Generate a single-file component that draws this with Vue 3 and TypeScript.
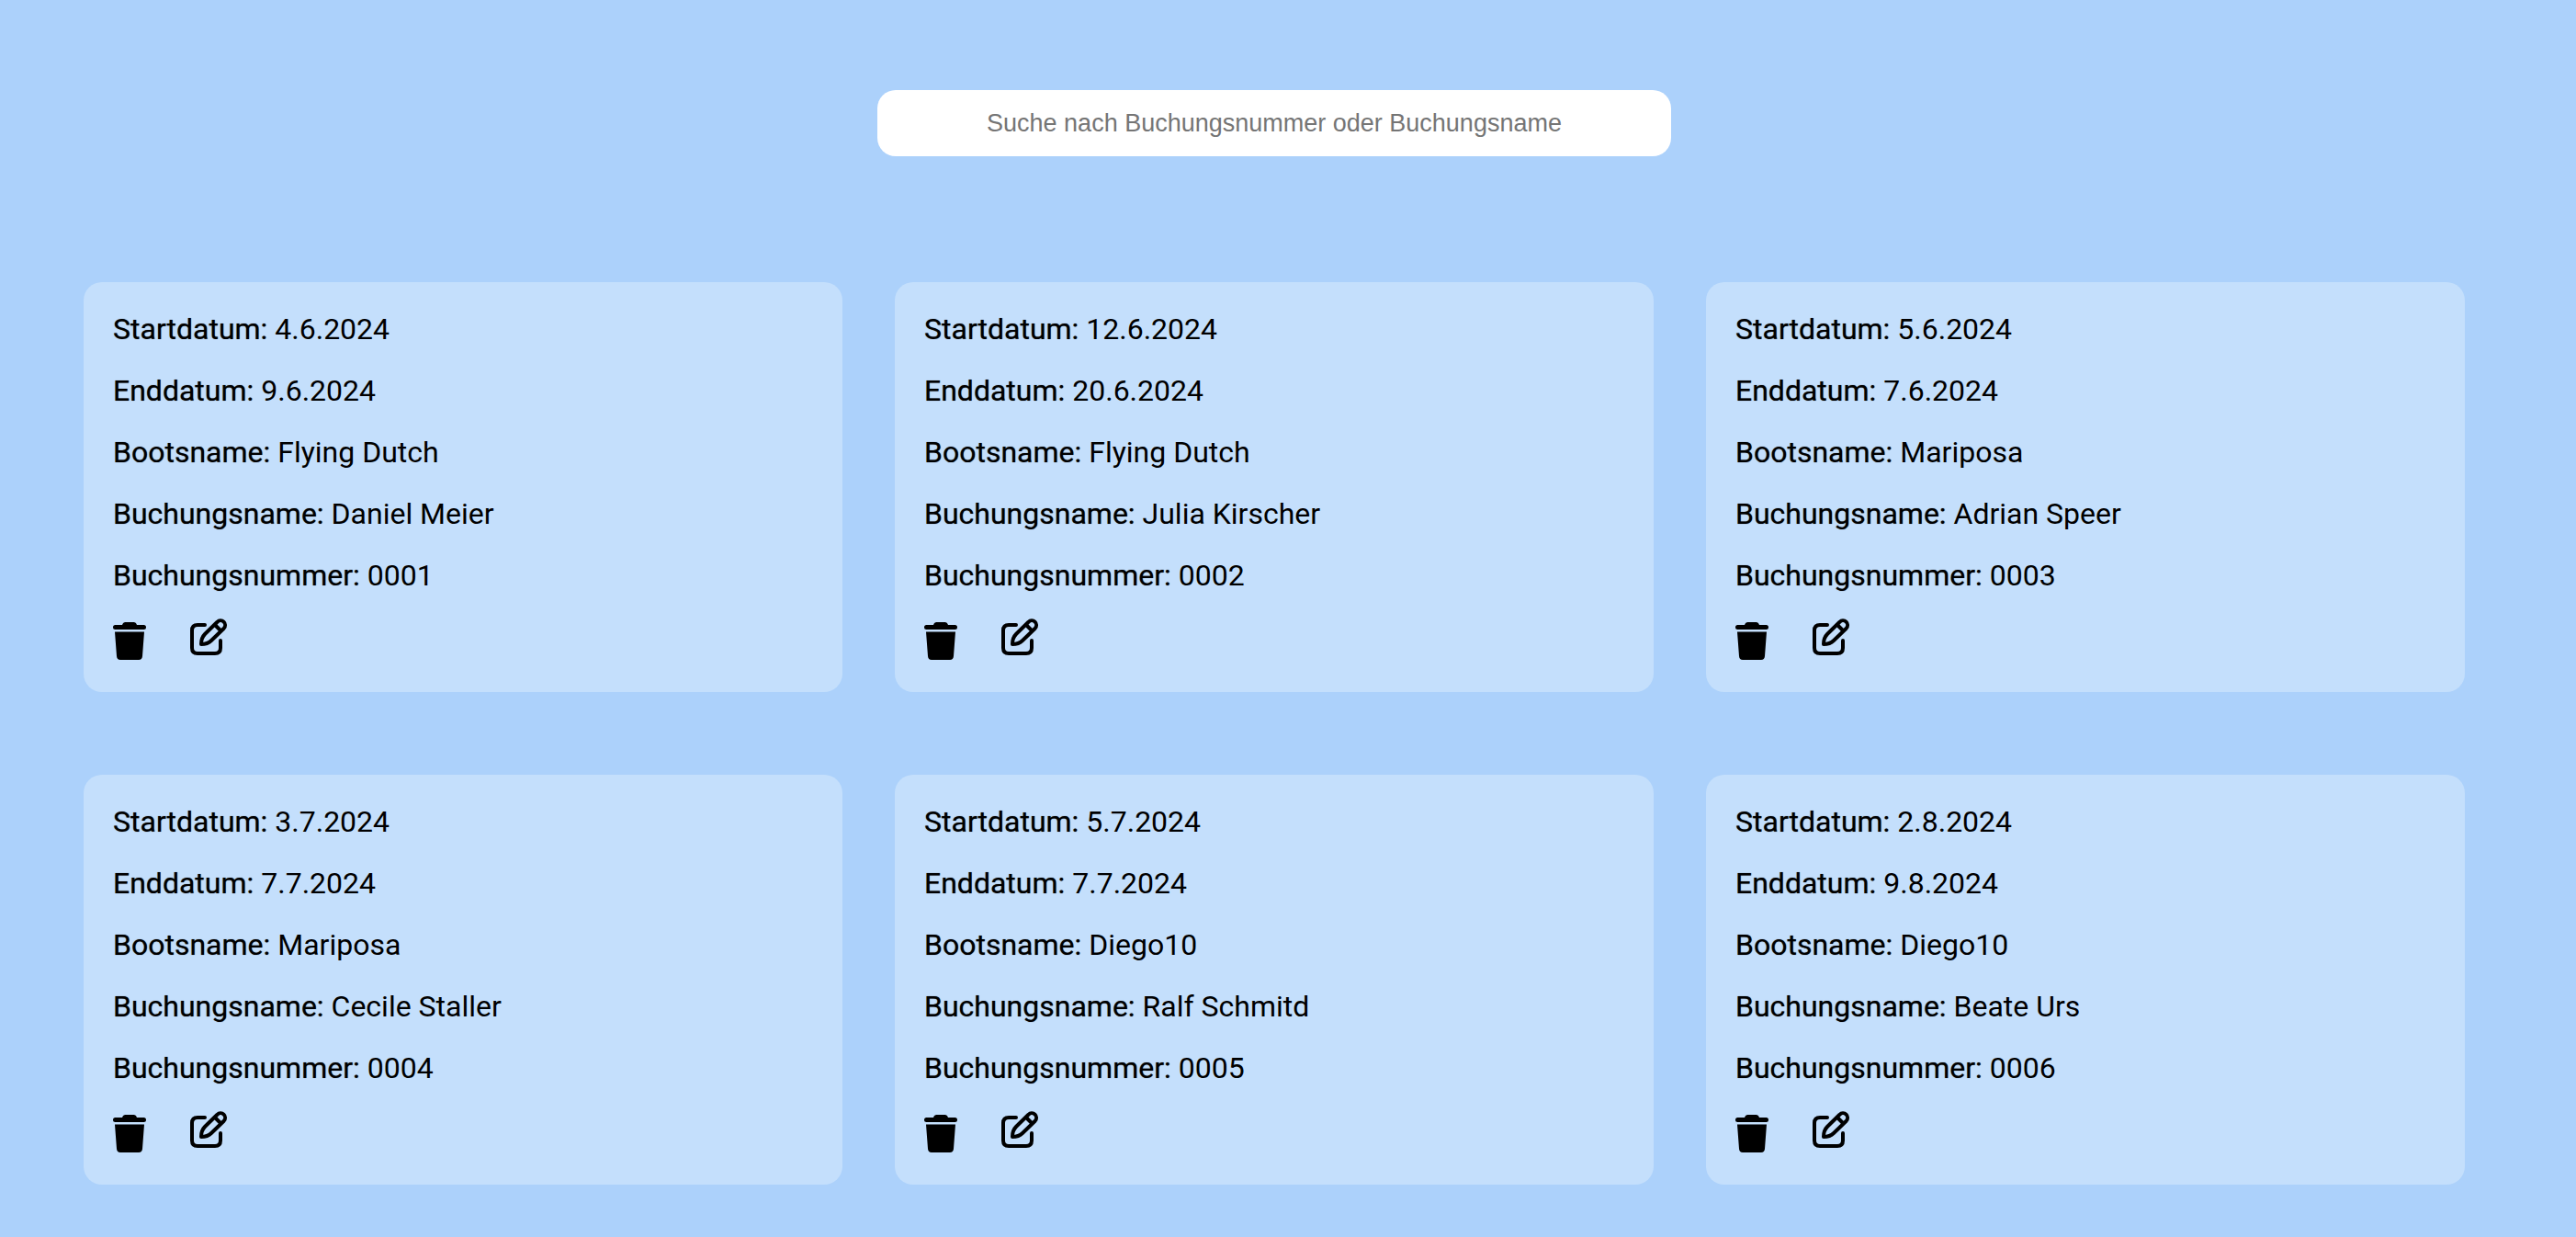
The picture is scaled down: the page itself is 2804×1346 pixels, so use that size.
<script setup lang="ts">
import { computed, ref } from 'vue'

interface Booking {
  start: string
  end: string
  boat: string
  name: string
  number: string
}

const bookings = ref<Booking[]>([
  { start: '4.6.2024', end: '9.6.2024', boat: 'Flying Dutch', name: 'Daniel Meier', number: '0001' },
  { start: '12.6.2024', end: '20.6.2024', boat: 'Flying Dutch', name: 'Julia Kirscher', number: '0002' },
  { start: '5.6.2024', end: '7.6.2024', boat: 'Mariposa', name: 'Adrian Speer', number: '0003' },
  { start: '3.7.2024', end: '7.7.2024', boat: 'Mariposa', name: 'Cecile Staller', number: '0004' },
  { start: '5.7.2024', end: '7.7.2024', boat: 'Diego10', name: 'Ralf Schmitd', number: '0005' },
  { start: '2.8.2024', end: '9.8.2024', boat: 'Diego10', name: 'Beate Urs', number: '0006' },
])

const query = ref('')

const visible = computed(() => {
  const q = query.value.trim().toLowerCase()
  return bookings.value.filter(b => b.number.includes(q) || b.name.toLowerCase().includes(q))
})

function remove(number: string) {
  bookings.value = bookings.value.filter(b => b.number !== number)
}
</script>

<template>
  <main class="page">
    <input
      v-model="query"
      class="search"
      type="text"
      aria-label="Suche nach Buchungsnummer oder Buchungsname"
      placeholder="Suche nach Buchungsnummer oder Buchungsname"
    />
    <section class="grid">
      <article v-for="b in visible" :key="b.number" class="card">
        <p class="row"><span class="label">Startdatum:</span> {{ b.start }}</p>
        <p class="row"><span class="label">Enddatum:</span> {{ b.end }}</p>
        <p class="row"><span class="label">Bootsname:</span> {{ b.boat }}</p>
        <p class="row"><span class="label">Buchungsname:</span> {{ b.name }}</p>
        <p class="row"><span class="label">Buchungsnummer:</span> {{ b.number }}</p>
        <div class="actions">
          <button type="button" class="icon" aria-label="Löschen" @click="remove(b.number)">
            <svg width="36" height="47" viewBox="0 0 36 47">
              <path d="M2.5 6H10Q11 3 13.500 3H22.500Q25 3 26 6H33.500A2.500 2.500 0 0 1 33.500 11H2.500A2.500 2.500 0 0 1 2.500 6Z" />
              <path d="M2 13.500H34L32 40Q31.700 44 28 44H8Q4.300 44 4 40Z" />
            </svg>
          </button>
          <button type="button" class="icon" aria-label="Bearbeiten">
            <svg width="42" height="47" viewBox="0 0 42 47" fill="none" stroke="#000" stroke-width="4" stroke-linecap="round" stroke-linejoin="round">
              <path d="M16 6H8Q2 6 2 12V31Q2 37 8 37H27Q33 37 33 31V23" />
              <path d="M12 27Q12 20 16 16L29.500 2.800A4.900 4.900 0 0 1 36.700 9.700L23 23Q19 27 12 27Z" />
              <path d="M27 6L33 12" />
            </svg>
          </button>
        </div>
      </article>
    </section>
  </main>
</template>

<style>
body {
  margin: 0;
  background: #acd1fb;
}
</style>

<style scoped>
.page {
  display: flex;
  flex-direction: column;
  align-items: center;
  padding: 98px 121px 57px 91px;
  font-family: Roboto, sans-serif;
  color: #000;
}

.search {
  box-sizing: border-box;
  width: 864px;
  max-width: 100%;
  height: 72px;
  border: 0;
  border-radius: 20px;
  background: #fff;
  font-family: "Liberation Sans", Arial, sans-serif;
  font-size: 27px;
  text-align: center;
}

.search::placeholder {
  color: #757575;
}

.grid {
  display: grid;
  grid-template-columns: repeat(3, 1fr);
  gap: 90px 57px;
  width: 100%;
  margin-top: 137px;
}

.card {
  padding: 32px;
  border-radius: 20px;
  background: #c4dffc;
  font-size: 32px;
  line-height: 38px;
}

.row {
  margin: 0 0 29px;
}

.label {
  text-shadow: 0 0 1px rgba(0, 0, 0, 0.6);
}

.actions {
  display: flex;
  gap: 48px;
}

.icon {
  display: flex;
  padding: 0;
  border: 0;
  background: none;
  cursor: pointer;
}

.icon svg {
  overflow: visible;
}
</style>
